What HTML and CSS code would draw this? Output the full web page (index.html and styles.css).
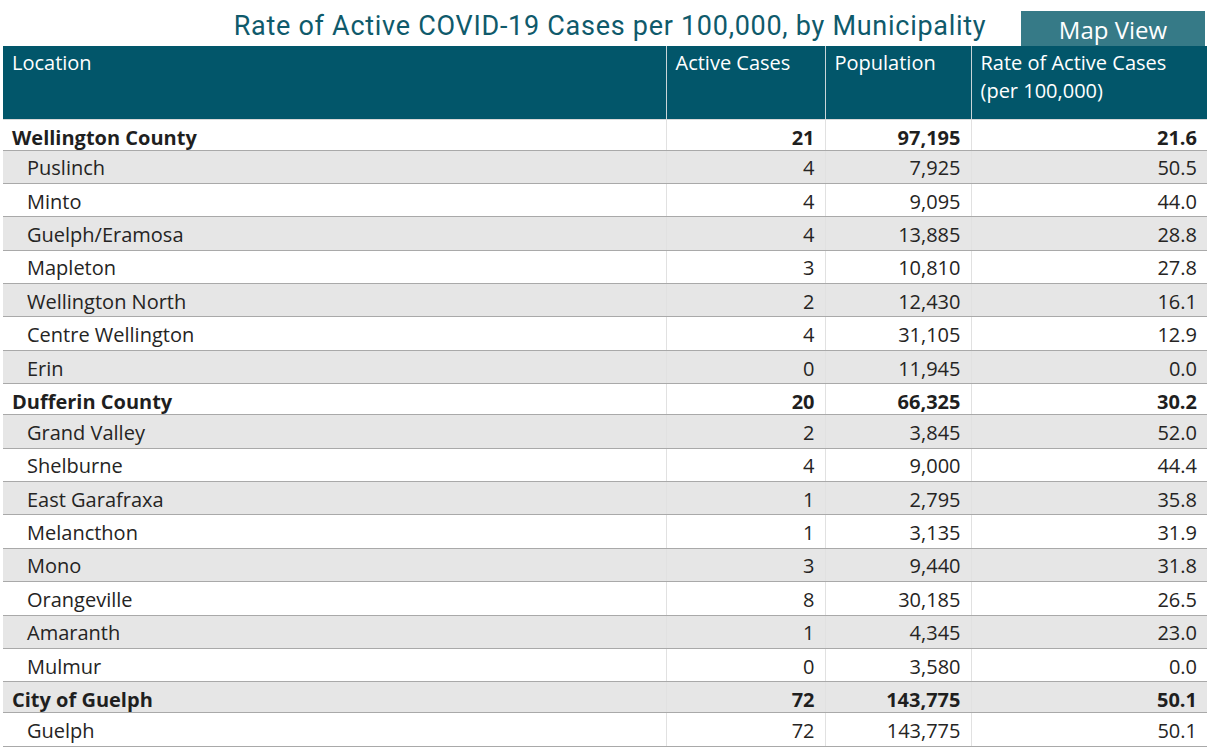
FILE: index.html
```html
<!DOCTYPE html>
<html lang="en">
<head>
<meta charset="utf-8">
<title>Rate of Active COVID-19 Cases per 100,000, by Municipality</title>
<link rel="stylesheet" href="styles.css">
</head>
<body>
<div class="page">
  <div class="topbar">
    <div class="spacer"></div>
    <h1 class="title">Rate of Active COVID-19 Cases per 100,000, by Municipality</h1>
    <div class="actions"><button class="map-btn" type="button">Map View</button></div>
  </div>
  <table class="grid">
    <colgroup>
      <col class="c-loc"><col class="c-cases"><col class="c-pop"><col class="c-rate">
    </colgroup>
    <thead>
      <tr>
        <th>Location</th>
        <th>Active Cases</th>
        <th>Population</th>
        <th>Rate of Active Cases<br>(per 100,000)</th>
      </tr>
    </thead>
    <tbody>
      <tr class="group"><td>Wellington County</td><td>21</td><td>97,195</td><td>21.6</td></tr>
      <tr class="alt"><td>Puslinch</td><td>4</td><td>7,925</td><td>50.5</td></tr>
      <tr><td>Minto</td><td>4</td><td>9,095</td><td>44.0</td></tr>
      <tr class="alt"><td>Guelph/Eramosa</td><td>4</td><td>13,885</td><td>28.8</td></tr>
      <tr><td>Mapleton</td><td>3</td><td>10,810</td><td>27.8</td></tr>
      <tr class="alt"><td>Wellington North</td><td>2</td><td>12,430</td><td>16.1</td></tr>
      <tr><td>Centre Wellington</td><td>4</td><td>31,105</td><td>12.9</td></tr>
      <tr class="alt"><td>Erin</td><td>0</td><td>11,945</td><td>0.0</td></tr>
      <tr class="group"><td>Dufferin County</td><td>20</td><td>66,325</td><td>30.2</td></tr>
      <tr class="alt"><td>Grand Valley</td><td>2</td><td>3,845</td><td>52.0</td></tr>
      <tr><td>Shelburne</td><td>4</td><td>9,000</td><td>44.4</td></tr>
      <tr class="alt"><td>East Garafraxa</td><td>1</td><td>2,795</td><td>35.8</td></tr>
      <tr><td>Melancthon</td><td>1</td><td>3,135</td><td>31.9</td></tr>
      <tr class="alt"><td>Mono</td><td>3</td><td>9,440</td><td>31.8</td></tr>
      <tr><td>Orangeville</td><td>8</td><td>30,185</td><td>26.5</td></tr>
      <tr class="alt"><td>Amaranth</td><td>1</td><td>4,345</td><td>23.0</td></tr>
      <tr><td>Mulmur</td><td>0</td><td>3,580</td><td>0.0</td></tr>
      <tr class="group alt"><td>City of Guelph</td><td>72</td><td>143,775</td><td>50.1</td></tr>
      <tr><td>Guelph</td><td>72</td><td>143,775</td><td>50.1</td></tr>
    </tbody>
  </table>
</div>
</body>
</html>
```
FILE: styles.css
```css
* { box-sizing: border-box; }
html, body { margin: 0; padding: 0; background: #ffffff; }
body { font-family: "Open Sans", "Noto Sans", sans-serif; color: #252423; }

.page { width: 1220px; height: 748px; overflow: hidden; }

.topbar {
  display: grid;
  grid-template-columns: 1fr auto 1fr;
  height: 46px;
  align-items: end;
}
.title {
  margin: 0;
  padding-bottom: 4px;
  font-family: "Roboto", "DejaVu Sans", sans-serif;
  font-weight: 400;
  font-size: 27px;
  line-height: 32px;
  color: #0f5a6b;
  letter-spacing: 0.72px;
  white-space: nowrap;
}
.actions { display: flex; justify-content: flex-end; padding-right: 15px; }
.map-btn {
  width: 184px;
  height: 35px;
  border: none;
  margin: 0;
  padding: 2px 0 0;
  background: #367a87;
  color: #ffffff;
  font-family: "Open Sans", sans-serif;
  font-size: 24px;
  line-height: 33px;
}

.grid {
  margin-left: 3px;
  width: 1204px;
  border-collapse: collapse;
  table-layout: fixed;
  font-size: 20px;
}
.c-loc { width: 663px; }
.c-cases { width: 159px; }
.c-pop { width: 146px; }
.c-rate { width: 236px; }

.grid th {
  background: #02566a;
  color: #ffffff;
  font-weight: 400;
  text-align: left;
  vertical-align: top;
  height: 73px;
  padding: 3px 9px 0;
  line-height: 28px;
  border-left: 1px solid #c9d5d8;
  border-bottom: 1px solid #d9d9d9;
}
.grid th:first-child { border-left: none; }

.grid td {
  height: 33.4px;
  padding: 3px 10px 0;
  line-height: 28px;
  text-align: right;
  border-left: 1px solid #e1e1e1;
  border-bottom: 1px solid #a9a9a9;
  white-space: nowrap;
}
.grid td:first-child {
  text-align: left;
  padding-left: 24px;
  border-left: none;
}
.grid tr.alt td { background: #e6e6e6; }
.grid tr.group td {
  height: 31px;
  font-weight: 700;
  padding-top: 6px;
  line-height: 24px;
  color: #1f1f1f;
}
.grid tr.group td:first-child { padding-left: 9px; }
```
